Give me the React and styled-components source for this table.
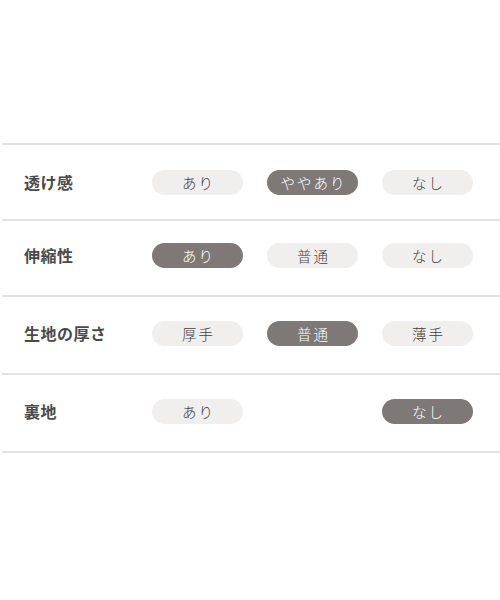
import React from "react";
import styled, { createGlobalStyle } from "styled-components";

const GlobalStyle = createGlobalStyle`
  body {
    margin: 0;
    background: #fff;
    font-family: "Noto Sans CJK JP", "Noto Sans", sans-serif;
  }
`;

const Page = styled.div`
  width: 500px;
  height: 600px;
  padding-top: 143px;
  box-sizing: border-box;
`;

const Table = styled.div`
  margin-left: 2px;
  border-bottom: 2px solid #e2e2e2;
`;

const Row = styled.div`
  display: grid;
  grid-template-columns: 126px 91px 91px 91px;
  column-gap: 24px;
  align-items: center;
  height: ${(p) => p.h}px;
  padding-bottom: ${(p) => p.lift * 2}px;
  border-top: 2px solid #e2e2e2;
  box-sizing: border-box;
`;

const Label = styled.div`
  padding-left: 22px;
  font-size: 16px;
  font-weight: 700;
  color: #4a4a4a;
  letter-spacing: 0.5px;
`;

const Pill = styled.div`
  height: 25px;
  border-radius: 13px;
  display: flex;
  align-items: center;
  justify-content: center;
  font-size: 14.5px;
  font-weight: 300;
  letter-spacing: 2px;
  padding-left: 2px;
  box-sizing: border-box;
  background: ${(p) => (p.on ? "#7e7877" : "#f1eeee")};
  color: ${(p) => (p.on ? "#fff" : "#3f3f3f")};
  visibility: ${(p) => (p.empty ? "hidden" : "visible")};
`;

const rows = [
  { label: "透け感", opts: ["あり", "ややあり", "なし"], sel: 1, h: 76, lift: 0 },
  { label: "伸縮性", opts: ["あり", "普通", "なし"], sel: 0, h: 76, lift: 3 },
  { label: "生地の厚さ", opts: ["厚手", "普通", "薄手"], sel: 1, h: 78, lift: 2 },
  { label: "裏地", opts: ["あり", "", "なし"], sel: 2, h: 78, lift: 2 },
];

export default function App() {
  return (
    <Page>
      <GlobalStyle />
      <Table>
        {rows.map((r) => (
          <Row key={r.label} h={r.h} lift={r.lift}>
            <Label>{r.label}</Label>
            {r.opts.map((o, i) => (
              <Pill key={i} on={i === r.sel} empty={!o}>
                {o}
              </Pill>
            ))}
          </Row>
        ))}
      </Table>
    </Page>
  );
}
